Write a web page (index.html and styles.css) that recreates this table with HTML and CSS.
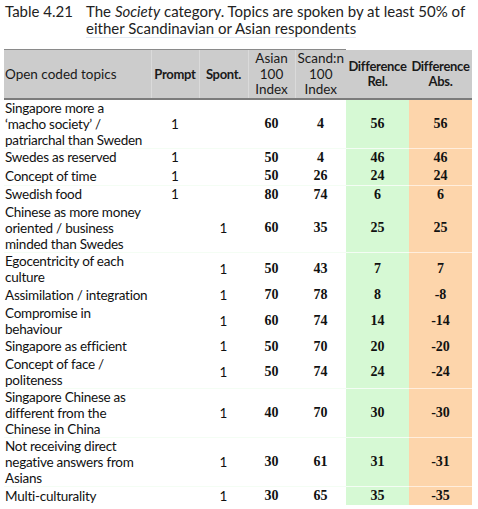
FILE: index.html
```html
<!DOCTYPE html>
<html lang="en">
<head>
    <meta charset="UTF-8">
    <meta name="viewport" content="width=device-width, initial-scale=1.0">
    <title>Table 4.21</title>
    <link rel="stylesheet" href="styles.css">
</head>
<body>
    <div id="page">
        <div class="caption">
            <span class="label">Table 4.21</span>
            <p class="title">The <i>Society</i> category. Topics are spoken by at least 50% of<br><span class="last">either Scandinavian or Asian respondents</span></p>
        </div>

        <table class="topics">
            <colgroup>
                <col class="c-topic">
                <col class="c-prompt">
                <col class="c-spont">
                <col class="c-asian">
                <col class="c-scand">
                <col class="c-rel">
                <col class="c-abs">
            </colgroup>
            <thead>
                <tr>
                    <th class="topic">Open coded topics</th>
                    <th class="bold">Prompt</th>
                    <th class="bold">Spont.</th>
                    <th>Asian<br>100<br>Index</th>
                    <th>Scand:n<br>100<br>Index</th>
                    <th class="bold rel">Difference<br>Rel.</th>
                    <th class="bold abs">Difference<br>Abs.</th>
                </tr>
            </thead>
            <tbody>
                <tr class="sep">
                    <td class="topic">Singapore more a<br>&lsquo;macho society&rsquo; /<br>patriarchal than Sweden</td>
                    <td class="one">1</td><td class="one"></td>
                    <td class="num">60</td><td class="num">4</td>
                    <td class="num rel">56</td><td class="num abs">56</td>
                </tr>
                <tr>
                    <td class="topic">Swedes as reserved</td>
                    <td class="one">1</td><td class="one"></td>
                    <td class="num">50</td><td class="num">4</td>
                    <td class="num rel">46</td><td class="num abs">46</td>
                </tr>
                <tr class="sep">
                    <td class="topic">Concept of time</td>
                    <td class="one">1</td><td class="one"></td>
                    <td class="num">50</td><td class="num">26</td>
                    <td class="num rel">24</td><td class="num abs">24</td>
                </tr>
                <tr>
                    <td class="topic">Swedish food</td>
                    <td class="one">1</td><td class="one"></td>
                    <td class="num">80</td><td class="num">74</td>
                    <td class="num rel">6</td><td class="num abs">6</td>
                </tr>
                <tr class="sep">
                    <td class="topic">Chinese as more money<br>oriented / business<br>minded than Swedes</td>
                    <td class="one"></td><td class="one">1</td>
                    <td class="num">60</td><td class="num">35</td>
                    <td class="num rel">25</td><td class="num abs">25</td>
                </tr>
                <tr>
                    <td class="topic">Egocentricity of each<br>culture</td>
                    <td class="one"></td><td class="one">1</td>
                    <td class="num">50</td><td class="num">43</td>
                    <td class="num rel">7</td><td class="num abs">7</td>
                </tr>
                <tr>
                    <td class="topic">Assimilation / integration</td>
                    <td class="one"></td><td class="one">1</td>
                    <td class="num">70</td><td class="num">78</td>
                    <td class="num rel">8</td><td class="num abs">-8</td>
                </tr>
                <tr>
                    <td class="topic">Compromise in<br>behaviour</td>
                    <td class="one"></td><td class="one">1</td>
                    <td class="num">60</td><td class="num">74</td>
                    <td class="num rel">14</td><td class="num abs">-14</td>
                </tr>
                <tr>
                    <td class="topic">Singapore as efficient</td>
                    <td class="one"></td><td class="one">1</td>
                    <td class="num">50</td><td class="num">70</td>
                    <td class="num rel">20</td><td class="num abs">-20</td>
                </tr>
                <tr class="sep">
                    <td class="topic">Concept of face /<br>politeness</td>
                    <td class="one"></td><td class="one">1</td>
                    <td class="num">50</td><td class="num">74</td>
                    <td class="num rel">24</td><td class="num abs">-24</td>
                </tr>
                <tr class="sep">
                    <td class="topic">Singapore Chinese as<br>different from the<br>Chinese in China</td>
                    <td class="one"></td><td class="one">1</td>
                    <td class="num">40</td><td class="num">70</td>
                    <td class="num rel">30</td><td class="num abs">-30</td>
                </tr>
                <tr class="sep">
                    <td class="topic">Not receiving direct<br>negative answers from<br>Asians</td>
                    <td class="one"></td><td class="one">1</td>
                    <td class="num">30</td><td class="num">61</td>
                    <td class="num rel">31</td><td class="num abs">-31</td>
                </tr>
                <tr>
                    <td class="topic">Multi-culturality</td>
                    <td class="one"></td><td class="one">1</td>
                    <td class="num">30</td><td class="num">65</td>
                    <td class="num rel">35</td><td class="num abs">-35</td>
                </tr>
            </tbody>
        </table>
    </div>
</body>
</html>
```

FILE: styles.css
```css
body {
    margin: 0;
    background: #fff;
    color: #111;
    font-family: "Lato", "Noto Sans", sans-serif;
}

#page {
    width: 478px;
}

/* caption */
.caption {
    display: flex;
    padding: 3px 0 0 5px;
    font-size: 15px;
    line-height: 17px;
    color: #222;
}
.caption .label {
    width: 81px;
    flex-shrink: 0;
}
.caption .title {
    margin: 0;
}
.caption .last {
    border-bottom: 1px solid #e3eaf3;
}

/* table */
.topics {
    margin: 12px 0 0 4px;
    border-collapse: collapse;
    table-layout: fixed;
    width: 468px;
    font-size: 13.5px;
}
.c-topic { width: 147px; }
.c-prompt { width: 48px; }
.c-spont { width: 49px; }
.c-asian { width: 47px; }
.c-scand { width: 51px; }
.c-rel { width: 63px; }
.c-abs { width: 63px; }

.topics th {
    background: #cccccc;
    font-weight: normal;
    line-height: 15.5px;
    padding: 1px 0 0;
    text-align: center;
    vertical-align: middle;
    white-space: nowrap;
    border-top: 1px solid #8a8a8a;
    border-bottom: 2px solid #7c7c7c;
    border-left: 1px solid #dadada;
    color: #1a1a1a;
}
.topics th.topic {
    text-align: left;
    padding-left: 1px;
    border-left: none;
}
.topics th.bold {
    font-weight: bold;
    font-size: 13px;
    letter-spacing: -0.3px;
}
.topics th.rel,
.topics th.abs {
    border-top: none;
    border-left: none;
}

.topics td {
    padding: 0;
    line-height: 16px;
    vertical-align: middle;
    text-align: center;
    white-space: nowrap;
    border-bottom: 1px solid transparent;
}
.topics tr.sep td {
    border-bottom-color: #f4fdf4;
}
.topics tr.sep td.abs {
    border-bottom-color: #ffeedd;
}
.topics td.topic {
    text-align: left;
    padding-left: 1px;
    letter-spacing: -0.25px;
}
.topics td.num {
    font-family: "Liberation Serif", serif;
    font-weight: bold;
    font-size: 14px;
    line-height: 17.5px;
}

.rel { background: #d6f9d4; }
.abs { background: #fdd5ab; }
```
